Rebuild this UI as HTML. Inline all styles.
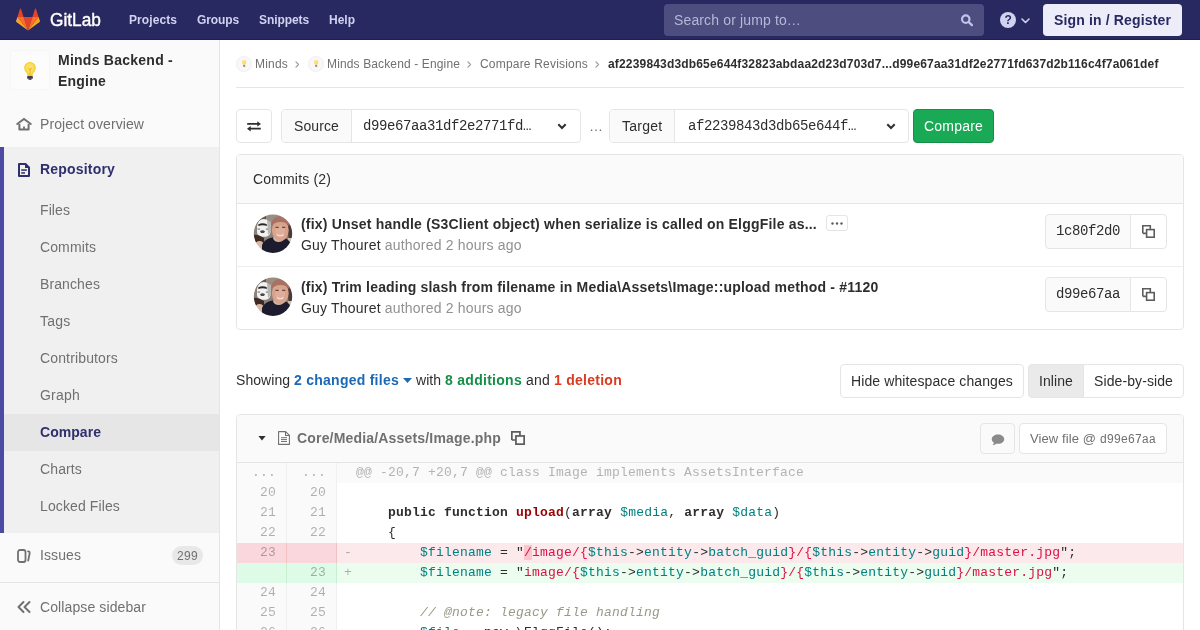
<!DOCTYPE html>
<html><head><meta charset="utf-8"><title>Compare · Minds Backend - Engine · GitLab</title>
<style>
*{box-sizing:border-box}
html,body{margin:0;padding:0}
body{width:1200px;height:630px;overflow:hidden;background:#fff;font-family:"Liberation Sans",sans-serif;font-size:14px;color:#2e2e2e;position:relative}
.t{position:absolute;white-space:pre;margin:0}
.abs{position:absolute}
svg{position:absolute;overflow:visible}
.mono{font-family:"Liberation Mono",monospace}
.hdr{position:absolute;left:0;top:0;width:1200px;height:40px;background:#292961;box-shadow:inset 0 -1px 0 #1f1f55}
.side{position:absolute;left:0;top:40px;width:220px;height:590px;background:#fafafa;border-right:1px solid #e5e5e5}
.box{position:absolute;border:1px solid #e5e5e5;border-radius:4px;background:#fff}
.row{position:absolute;left:237px;width:946px;height:20px}
.row .o,.row .n{position:absolute;top:0;width:50px;height:20px;background:#fafafa;border-right:1px solid #f0f0f0}
.row .o{left:0}.row .n{left:50px}
.row .c{position:absolute;left:100px;top:0;width:846px;height:20px;background:#fff}
.row.m .c{background:#fafafa}
.row.del .o,.row.del .n{background:#f9d7dc;border-color:#f1c0c0}
.row.del .c{background:#fbe9eb}
.row.add .o,.row.add .n{background:#ddfbe6;border-color:#c7f0d2}
.row.add .c{background:#ecfdf0}
.code{position:absolute;left:119px;top:0;font-family:"Liberation Mono",monospace;font-size:13px;line-height:20px;letter-spacing:0.2px;white-space:pre;color:#2e2e2e}
.num{position:absolute;top:0;font-family:"Liberation Mono",monospace;font-size:13px;line-height:20px;letter-spacing:0.2px;white-space:pre;color:rgba(0,0,0,.3);text-align:right}
.k{font-weight:bold}.nf{color:#900;font-weight:bold}.nv{color:#008080}.s{color:#d14}.cm{color:#998;font-style:italic}.idiff{background:#fac5cd}
#w{position:absolute;left:0;top:0;width:1200px;height:630px;overflow:hidden;will-change:transform}
</style></head><body><div id="w">
<div class="hdr">
<svg style="left:16px;top:8.400px" width="24" height="23" viewBox="0 0 24 23"><path d="M12 22.6 16.4 9H7.6z" fill="#e24329"/><path d="M12 22.600 7.600 9H1.400z" fill="#fc6d26"/><path d="M1.400 9 .05 13.100c-.12.380.01.790.330 1.020L12 22.600z" fill="#fca326"/><path d="M1.400 9h6.200L4.940.800c-.140-.420-.730-.420-.870 0z" fill="#e24329"/><path d="M12 22.600 16.400 9h6.200z" fill="#fc6d26"/><path d="m22.600 9 1.350 4.100c.12.380-.01.790-.33 1.020L12 22.600z" fill="#fca326"/><path d="M22.600 9h-6.200L19.060.8c.14-.42.730-.42.870 0z" fill="#e24329"/></svg>
<div class="t" style="left:49.500px;top:7.800px;font-size:18px;line-height:24px;color:#fff;-webkit-text-stroke:0.400px #fff;transform-origin:0 50%;transform:scaleX(0.960)">GitLab</div>
<div class="t" style="left:129px;top:10px;font-size:12px;line-height:20px;letter-spacing:0.082px;font-weight:bold;color:#d1d1f0;">Projects</div>
<div class="t" style="left:197px;top:10px;font-size:12px;line-height:20px;letter-spacing:-0.110px;font-weight:bold;color:#d1d1f0;">Groups</div>
<div class="t" style="left:259px;top:10px;font-size:12px;line-height:20px;letter-spacing:-0.082px;font-weight:bold;color:#d1d1f0;">Snippets</div>
<div class="t" style="left:329px;top:10px;font-size:12px;line-height:20px;letter-spacing:0.000px;font-weight:bold;color:#d1d1f0;">Help</div>
<div class="abs" style="left:664px;top:4px;width:320px;height:32px;border-radius:4px;background:#4d4d80"></div>
<div class="t" style="left:674px;top:10px;font-size:14px;line-height:20px;letter-spacing:0.138px;color:#b7b7d6;">Search or jump to…</div>
<svg style="left:960px;top:14px" width="13" height="13" viewBox="0 0 13 13"><circle cx="5.750" cy="5.150" r="3.700" fill="none" stroke="#c4c4ea" stroke-width="2.200"/><path d="M8.600 8 11.900 11.200" stroke="#c4c4ea" stroke-width="2.300" stroke-linecap="round"/></svg>
<div class="abs" style="left:1000px;top:12.300px;width:16px;height:16px;border-radius:50%;background:#d1d1f0"></div>
<div class="t" style="left:1004.500px;top:12.300px;font-size:12px;line-height:16px;font-weight:bold;color:#292961">?</div>
<svg style="left:1021px;top:17.900px" width="9" height="6" viewBox="0 0 9 6"><path d="M1 1 4.500 4.500 8 1" fill="none" stroke="#d1d1f0" stroke-width="1.600" stroke-linecap="round" stroke-linejoin="round"/></svg>
<div class="abs" style="left:1043px;top:4px;width:139px;height:32px;border-radius:4px;background:#ededfa"></div>
<div class="t" style="left:1054px;top:10px;font-size:14px;line-height:20px;letter-spacing:0.147px;font-weight:bold;color:#292961;">Sign in / Register</div>
</div>
<div class="side">
<div class="abs" style="left:10px;top:10px;width:40px;height:40px;border-radius:3px;background:#fcfcfc;border:1px solid #f6f6f6"></div>
<svg style="left:23.500px;top:22px" width="12" height="18" viewBox="0 0 13 20"><path d="M6.500 0C2.900 0 0 2.800 0 6.300c0 2.300 1.300 4 2.300 5.500.7 1 1.200 2.200 1.200 3.700h6c0-1.500.5-2.700 1.200-3.700 1-1.500 2.300-3.200 2.300-5.500C13 2.800 10.100 0 6.500 0z" fill="#f7d23a"/><path d="M6.500 1.500c-2.500 0-4.500 2-4.500 4.500 0 1.500.8 2.800 1.600 4l1.200 3h3.400l1.200-3c.8-1.200 1.600-2.500 1.600-4 0-2.500-2-4.500-4.500-4.500z" fill="#fbe98a" opacity=".6"/><path d="M4.500 6.500 6.500 9 8.500 6.500M6.500 9v6" fill="none" stroke="#f2b200" stroke-width="1"/><rect x="3.300" y="15.500" width="6.400" height="3.200" rx="1" fill="#4a3b52"/><rect x="4.600" y="18.200" width="3.800" height="1.600" rx=".8" fill="#2f2535"/></svg>
<div class="t" style="left:58px;top:10px;font-size:14px;line-height:21px;letter-spacing:0.250px;font-weight:bold;">Minds Backend -</div>
<div class="t" style="left:58px;top:31px;font-size:14px;line-height:21px;letter-spacing:0.222px;font-weight:bold;">Engine</div>
<svg style="left:16px;top:76px" width="16" height="16" viewBox="0 0 16 16"><path d="M1.200 8 8 3 14.800 8" fill="none" stroke="#707070" stroke-width="2" stroke-linecap="round" stroke-linejoin="miter"/><path d="M3.400 8v5.600h9.200V8" fill="none" stroke="#707070" stroke-width="2" stroke-linejoin="round"/><path d="M8 10.600v3" stroke="#707070" stroke-width="1.800"/></svg>
<div class="t" style="left:40px;top:74px;font-size:14px;line-height:20px;letter-spacing:0.080px;color:#707070;">Project overview</div>
<div class="abs" style="left:0;top:107px;width:219px;height:386px;background:#f0f0f0"></div>
<div class="abs" style="left:0;top:107px;width:4px;height:386px;background:#4b4ba3"></div>
<div class="abs" style="left:4px;top:374px;width:215px;height:37px;background:#e6e6e6"></div>
<svg style="left:16px;top:121px" width="16" height="16" viewBox="0 0 16 16"><path d="M3 3h6.500L13 6.500V15H3z" fill="none" stroke="#2f2f6e" stroke-width="2" stroke-linejoin="round"/><path d="M9 3v4h4" fill="#2f2f6e"/><rect x="5.200" y="8.300" width="5.700" height="1.500" fill="#2f2f6e"/><rect x="5.200" y="11.200" width="3.800" height="1.500" fill="#2f2f6e"/></svg>
<div class="t" style="left:40px;top:119px;font-size:14px;line-height:20px;letter-spacing:0.187px;font-weight:bold;color:#2f2f6e;">Repository</div>
<div class="t" style="left:40px;top:160px;font-size:14px;line-height:20px;letter-spacing:0.088px;color:#707070;">Files</div>
<div class="t" style="left:40px;top:197px;font-size:14px;line-height:20px;letter-spacing:0.111px;color:#707070;">Commits</div>
<div class="t" style="left:40px;top:234px;font-size:14px;line-height:20px;letter-spacing:0.105px;color:#707070;">Branches</div>
<div class="t" style="left:40px;top:271px;font-size:14px;line-height:20px;letter-spacing:0.220px;color:#707070;">Tags</div>
<div class="t" style="left:40px;top:308px;font-size:14px;line-height:20px;letter-spacing:0.144px;color:#707070;">Contributors</div>
<div class="t" style="left:40px;top:345px;font-size:14px;line-height:20px;letter-spacing:0.216px;color:#707070;">Graph</div>
<div class="t" style="left:40px;top:382px;font-size:14px;line-height:20px;letter-spacing:0.044px;font-weight:bold;color:#2f2f6e;">Compare</div>
<div class="t" style="left:40px;top:419px;font-size:14px;line-height:20px;letter-spacing:0.127px;color:#707070;">Charts</div>
<div class="t" style="left:40px;top:456px;font-size:14px;line-height:20px;letter-spacing:0.116px;color:#707070;">Locked Files</div>
<svg style="left:16px;top:508px" width="16" height="16" viewBox="0 0 16 16"><rect x="2" y="2" width="7.500" height="12" rx="2" fill="none" stroke="#707070" stroke-width="1.800"/><path d="M12 3.400l.900.300c.600.200.900.700.800 1.300l-1.500 7.600" fill="none" stroke="#707070" stroke-width="1.800" stroke-linecap="round" stroke-linejoin="round"/></svg>
<div class="t" style="left:40px;top:505px;font-size:14px;line-height:20px;letter-spacing:0.088px;color:#707070;">Issues</div>
<div class="abs" style="left:172px;top:506px;width:31px;height:19px;border-radius:10px;background:#e8e8e8"></div>
<div class="t" style="left:177px;top:507px;font-size:12px;line-height:19px;letter-spacing:0.330px;color:#707070;">299</div>
<div class="abs" style="left:0;top:542px;width:219px;height:48px;border-top:1px solid #e5e5e5;background:#fafafa"></div>
<svg style="left:17px;top:561px" width="14" height="12" viewBox="0 0 14 12"><path d="M6.500 1 1.500 6 6.500 11M12.500 1 7.500 6 12.500 11" fill="none" stroke="#707070" stroke-width="2" stroke-linecap="round" stroke-linejoin="round"/></svg>
<div class="t" style="left:40px;top:557px;font-size:14px;line-height:20px;letter-spacing:0.106px;color:#707070;">Collapse sidebar</div>
</div>
<div class="abs" style="left:236px;top:87px;width:948px;height:1px;background:#e5e5e5"></div>
<div class="abs" style="left:236px;top:56px;width:15.500px;height:15.500px;border-radius:50%;background:#f8f8f8;border:1px solid #efefef"></div><svg style="left:241.6px;top:60px" width="4.400" height="7" viewBox="0 0 13 20" opacity=".75"><path d="M6.500 0C2.900 0 0 2.800 0 6.300c0 2.300 1.300 4 2.300 5.500.7 1 1.200 2.200 1.200 3.700h6c0-1.500.5-2.700 1.200-3.700 1-1.500 2.300-3.200 2.300-5.500C13 2.800 10.100 0 6.500 0z" fill="#f7d23a"/><path d="M6.500 1.500c-2.500 0-4.500 2-4.500 4.500 0 1.500.8 2.800 1.600 4l1.200 3h3.400l1.200-3c.8-1.200 1.600-2.500 1.600-4 0-2.500-2-4.500-4.500-4.500z" fill="#fbe98a" opacity=".6"/><path d="M4.500 6.500 6.500 9 8.500 6.500M6.500 9v6" fill="none" stroke="#f2b200" stroke-width="1"/><rect x="3.300" y="15.500" width="6.400" height="3.200" rx="1" fill="#4a3b52"/><rect x="4.600" y="18.200" width="3.800" height="1.600" rx=".8" fill="#2f2535"/></svg>
<div class="t" style="left:255px;top:54px;font-size:12px;line-height:20px;letter-spacing:0.198px;color:#707070;">Minds</div>
<svg style="left:295px;top:60.500px" width="4.500" height="7" viewBox="0 0 5 8"><path d="M1 1 4 4 1 7" fill="none" stroke="#999" stroke-width="1.300" stroke-linecap="round" stroke-linejoin="round"/></svg>
<div class="abs" style="left:308px;top:56px;width:15.500px;height:15.500px;border-radius:50%;background:#f8f8f8;border:1px solid #efefef"></div><svg style="left:313.6px;top:60px" width="4.400" height="7" viewBox="0 0 13 20" opacity=".75"><path d="M6.500 0C2.900 0 0 2.800 0 6.300c0 2.300 1.300 4 2.300 5.500.7 1 1.200 2.200 1.200 3.700h6c0-1.500.5-2.700 1.200-3.700 1-1.500 2.300-3.200 2.300-5.500C13 2.800 10.100 0 6.500 0z" fill="#f7d23a"/><path d="M6.500 1.500c-2.500 0-4.500 2-4.500 4.500 0 1.500.8 2.800 1.600 4l1.200 3h3.400l1.200-3c.8-1.200 1.600-2.500 1.600-4 0-2.500-2-4.500-4.500-4.500z" fill="#fbe98a" opacity=".6"/><path d="M4.500 6.500 6.500 9 8.500 6.500M6.500 9v6" fill="none" stroke="#f2b200" stroke-width="1"/><rect x="3.300" y="15.500" width="6.400" height="3.200" rx="1" fill="#4a3b52"/><rect x="4.600" y="18.200" width="3.800" height="1.600" rx=".8" fill="#2f2535"/></svg>
<div class="t" style="left:327px;top:54px;font-size:12px;line-height:20px;letter-spacing:0.135px;color:#707070;">Minds Backend - Engine</div>
<svg style="left:467px;top:60.500px" width="4.500" height="7" viewBox="0 0 5 8"><path d="M1 1 4 4 1 7" fill="none" stroke="#999" stroke-width="1.300" stroke-linecap="round" stroke-linejoin="round"/></svg>
<div class="t" style="left:480px;top:54px;font-size:12px;line-height:20px;letter-spacing:0.194px;color:#707070;">Compare Revisions</div>
<svg style="left:595px;top:60.500px" width="4.500" height="7" viewBox="0 0 5 8"><path d="M1 1 4 4 1 7" fill="none" stroke="#999" stroke-width="1.300" stroke-linecap="round" stroke-linejoin="round"/></svg>
<div class="t" style="left:608px;top:54px;font-size:12px;line-height:20px;letter-spacing:0.171px;font-weight:bold;color:#2e2e2e;">af2239843d3db65e644f32823abdaa2d23d703d7...d99e67aa31df2e2771fd637d2b116c4f7a061def</div>
<div class="box" style="left:236px;top:109px;width:36px;height:34px"></div>
<svg style="left:246px;top:119px" width="16" height="14" viewBox="0 0 16 14"><path d="M1.200 4.900h11M4 9.700h10.800" stroke="#2e2e2e" stroke-width="1.700" fill="none"/><path d="M11.300 2.200 15 4.900l-3.700 2.700zM4.700 7 1 9.700l3.700 2.700z" fill="#2e2e2e"/></svg>
<div class="box" style="left:281px;top:109px;width:300px;height:34px"></div>
<div class="abs" style="left:282px;top:110px;width:70px;height:32px;background:#fafafa;border-right:1px solid #e5e5e5;border-radius:3px 0 0 3px"></div>
<div class="t" style="left:294px;top:116px;font-size:14px;line-height:20px;letter-spacing:0.105px;">Source</div>
<div class="t" style="left:363px;top:116px;font-size:14px;line-height:20px;letter-spacing:-0.400px;font-family:'Liberation Mono',monospace;">d99e67aa31df2e2771fd…</div>
<svg style="left:557px;top:122.8px" width="10" height="7" viewBox="0 0 10 7"><path d="M1.300 1.300 5 5 8.700 1.300" fill="none" stroke="#2e2e2e" stroke-width="2" stroke-linejoin="miter"/></svg>
<div class="t" style="left:589px;top:116px;font-size:14px;line-height:20px;letter-spacing:0.000px;color:#707070;">…</div>
<div class="box" style="left:609px;top:109px;width:300px;height:34px"></div>
<div class="abs" style="left:610px;top:110px;width:65px;height:32px;background:#fafafa;border-right:1px solid #e5e5e5;border-radius:3px 0 0 3px"></div>
<div class="t" style="left:622px;top:116px;font-size:14px;line-height:20px;letter-spacing:0.256px;">Target</div>
<div class="t" style="left:688px;top:116px;font-size:14px;line-height:20px;letter-spacing:-0.400px;font-family:'Liberation Mono',monospace;">af2239843d3db65e644f…</div>
<svg style="left:885.5px;top:122.8px" width="10" height="7" viewBox="0 0 10 7"><path d="M1.300 1.300 5 5 8.700 1.300" fill="none" stroke="#2e2e2e" stroke-width="2" stroke-linejoin="miter"/></svg>
<div class="box" style="left:913px;top:109px;width:81px;height:34px;background:#1aaa55;border-color:#168f48"></div>
<div class="t" style="left:924px;top:116px;font-size:14px;line-height:20px;letter-spacing:0.201px;color:#fff;">Compare</div>
<div class="box" style="left:236px;top:154px;width:948px;height:176px"></div>
<div class="abs" style="left:237px;top:155px;width:946px;height:49px;background:#fafafa;border-bottom:1px solid #e5e5e5;border-radius:3px 3px 0 0"></div>
<div class="t" style="left:253px;top:169px;font-size:14px;line-height:20px;letter-spacing:0.162px;">Commits (2)</div>
<div class="abs" style="left:237px;top:266px;width:946px;height:1px;background:#eee"></div>
<svg style="left:253px;top:214px" width="40" height="40" viewBox="0 0 40 40"><defs><clipPath id="cp1"><circle cx="20" cy="19.700" r="19.200"/></clipPath><filter id="bl1" x="-20%" y="-20%" width="140%" height="140%"><feGaussianBlur stdDeviation="0.78"/></filter></defs>
<g clip-path="url(#cp1)"><g filter="url(#bl1)"><rect x="-3" y="-3" width="46" height="46" fill="#8d827a"/>
<path d="M-2-2h17l-2 7-15 9z" fill="#5e5853"/><path d="M13 0h12v9H13z" fill="#9a8d84"/>
<path d="M34 7h9v22h-7z" fill="#4c3a36"/><path d="M35 24h8v8h-8z" fill="#c9bdb5"/>
<path d="M4 13.500c0-5.500 3-8.500 6.800-8.500s6.700 3 6.700 8.500v4c0 3-2 5.300-6.700 5.300S4 20.500 4 17.500z" fill="#f1f1f1"/><path d="M14 6l4 2v10l-3 3z" fill="#b9b6b3"/>
<path d="M5.300 10.200c2.800-1.200 6-1.200 8.500 0v1.700c-2.500-1-5.700-1-8.500 0z" fill="#2b2b2b"/><path d="M7 17.300c1.300-1.400 3.600-1.400 5 0l-1 1.700H8z" fill="#4a4a4a"/><path d="M4.500 14.300h2.600v1.800H4.500zM12.800 14.300h2.600v1.800h-2.600z" fill="#a5a5a5"/>
<path d="M-1 21c3-1 8 0 12 3v6H-1z" fill="#3e2b23"/><ellipse cx="6.500" cy="31" rx="4.500" ry="4" fill="#d9b9a5"/>
<path d="M9 42V31c2-5 7-7.500 12-7.500h8c4 0 8 3 10 8.500v10z" fill="#1a1f2d"/>
<path d="M20 24.500c2 4.800 9 4.800 11.500 0l-1-3h-9.500z" fill="#d8b4a0"/>
<ellipse cx="27.300" cy="16.300" rx="8.400" ry="11" fill="#d9a28c"/><ellipse cx="27" cy="17.500" rx="5" ry="6" fill="#e0ae98"/>
<path d="M18.300 12.500c-.6-6.500 4-10.500 9.500-10.500s9.300 3.800 8.500 10.500c-1.500-3-4.500-4.500-8.800-4.500s-7.500 1.500-9.200 4.500z" fill="#a87262"/>
<path d="M22.500 13.300h3.300M29 13.300h3.300" stroke="#6e4a3f" stroke-width="1.200"/><path d="M24 20.500c1.800 1.700 4.800 1.700 6.400 0" stroke="#f3e3dd" stroke-width="1.100" fill="none"/></g></g></svg>
<div class="t" style="left:301px;top:214px;font-size:14px;line-height:20px;letter-spacing:0.199px;font-weight:bold;">(fix) Unset handle (S3Client object) when serialize is called on ElggFile as...</div>
<div class="t" style="left:301px;top:235px;line-height:20px;font-size:14px"><span style="letter-spacing:0.198px;">Guy Thouret</span><span style="letter-spacing:0.189px;color:#919191;"> authored 2 hours ago</span></div>
<div class="box" style="left:1045px;top:214px;width:86px;height:35px;background:#fafafa;border-radius:4px 0 0 4px"></div>
<div class="t" style="left:1056px;top:221px;font-size:14px;line-height:20px;letter-spacing:-0.400px;font-family:'Liberation Mono',monospace;">1c80f2d0</div>
<div class="box" style="left:1130px;top:214px;width:37px;height:35px;border-radius:0 4px 4px 0"></div>
<svg style="left:1142px;top:225px" width="13" height="13" viewBox="0 0 14 14"><path d="M.850 9V.850h8.100v4.100M.850 9h4.100" fill="none" stroke="#5c5c5c" stroke-width="1.7"/><rect x="4.950" y="4.950" width="8.200" height="8.200" fill="none" stroke="#5c5c5c" stroke-width="1.7"/></svg>
<div class="box" style="left:826px;top:215px;width:22px;height:16px;border-color:#e5e5e5;border-radius:3px;background:#fff"></div>
<svg style="left:831px;top:221.500px" width="12" height="3" viewBox="0 0 12 3"><circle cx="1.500" cy="1.500" r="1.200" fill="#5c5c5c"/><circle cx="6" cy="1.500" r="1.200" fill="#5c5c5c"/><circle cx="10.500" cy="1.500" r="1.200" fill="#5c5c5c"/></svg>
<svg style="left:253px;top:277px" width="40" height="40" viewBox="0 0 40 40"><defs><clipPath id="cp2"><circle cx="20" cy="19.700" r="19.200"/></clipPath><filter id="bl2" x="-20%" y="-20%" width="140%" height="140%"><feGaussianBlur stdDeviation="0.78"/></filter></defs>
<g clip-path="url(#cp2)"><g filter="url(#bl2)"><rect x="-3" y="-3" width="46" height="46" fill="#8d827a"/>
<path d="M-2-2h17l-2 7-15 9z" fill="#5e5853"/><path d="M13 0h12v9H13z" fill="#9a8d84"/>
<path d="M34 7h9v22h-7z" fill="#4c3a36"/><path d="M35 24h8v8h-8z" fill="#c9bdb5"/>
<path d="M4 13.500c0-5.500 3-8.500 6.800-8.500s6.700 3 6.700 8.500v4c0 3-2 5.300-6.700 5.300S4 20.500 4 17.500z" fill="#f1f1f1"/><path d="M14 6l4 2v10l-3 3z" fill="#b9b6b3"/>
<path d="M5.300 10.200c2.800-1.200 6-1.200 8.500 0v1.700c-2.500-1-5.700-1-8.500 0z" fill="#2b2b2b"/><path d="M7 17.300c1.300-1.400 3.600-1.400 5 0l-1 1.700H8z" fill="#4a4a4a"/><path d="M4.500 14.300h2.600v1.800H4.500zM12.800 14.300h2.600v1.800h-2.600z" fill="#a5a5a5"/>
<path d="M-1 21c3-1 8 0 12 3v6H-1z" fill="#3e2b23"/><ellipse cx="6.500" cy="31" rx="4.500" ry="4" fill="#d9b9a5"/>
<path d="M9 42V31c2-5 7-7.500 12-7.500h8c4 0 8 3 10 8.500v10z" fill="#1a1f2d"/>
<path d="M20 24.500c2 4.800 9 4.800 11.500 0l-1-3h-9.500z" fill="#d8b4a0"/>
<ellipse cx="27.300" cy="16.300" rx="8.400" ry="11" fill="#d9a28c"/><ellipse cx="27" cy="17.500" rx="5" ry="6" fill="#e0ae98"/>
<path d="M18.300 12.500c-.6-6.500 4-10.500 9.500-10.500s9.300 3.800 8.500 10.500c-1.500-3-4.500-4.500-8.800-4.500s-7.500 1.500-9.200 4.500z" fill="#a87262"/>
<path d="M22.500 13.300h3.300M29 13.300h3.300" stroke="#6e4a3f" stroke-width="1.200"/><path d="M24 20.500c1.800 1.700 4.800 1.700 6.400 0" stroke="#f3e3dd" stroke-width="1.100" fill="none"/></g></g></svg>
<div class="t" style="left:301px;top:277px;font-size:14px;line-height:20px;letter-spacing:0.189px;font-weight:bold;">(fix) Trim leading slash from filename in Media\Assets\Image::upload method - #1120</div>
<div class="t" style="left:301px;top:298px;line-height:20px;font-size:14px"><span style="letter-spacing:0.198px;">Guy Thouret</span><span style="letter-spacing:0.189px;color:#919191;"> authored 2 hours ago</span></div>
<div class="box" style="left:1045px;top:277px;width:86px;height:35px;background:#fafafa;border-radius:4px 0 0 4px"></div>
<div class="t" style="left:1056px;top:284px;font-size:14px;line-height:20px;letter-spacing:-0.400px;font-family:'Liberation Mono',monospace;">d99e67aa</div>
<div class="box" style="left:1130px;top:277px;width:37px;height:35px;border-radius:0 4px 4px 0"></div>
<svg style="left:1142px;top:288px" width="13" height="13" viewBox="0 0 14 14"><path d="M.850 9V.850h8.100v4.100M.850 9h4.100" fill="none" stroke="#5c5c5c" stroke-width="1.7"/><rect x="4.950" y="4.950" width="8.200" height="8.200" fill="none" stroke="#5c5c5c" stroke-width="1.7"/></svg>
<div class="t" style="left:236px;top:370px;line-height:20px;font-size:14px"><span style="letter-spacing:0.049px;">Showing </span><span style="letter-spacing:0.256px;font-weight:bold;color:#1b69b6;">2 changed files</span></div>
<svg style="left:403px;top:378px" width="9" height="5" viewBox="0 0 9 5"><path d="M0 0h9L4.500 5z" fill="#1b69b6"/></svg>
<div class="t" style="left:416px;top:370px;line-height:20px;font-size:14px"><span style="letter-spacing:0.042px;">with </span><span style="letter-spacing:0.282px;font-weight:bold;color:#168f48;">8 additions</span><span style="letter-spacing:0.170px;"> and </span><span style="letter-spacing:0.265px;font-weight:bold;color:#db3b21;">1 deletion</span></div>
<div class="box" style="left:840px;top:364px;width:184px;height:34px"></div>
<div class="t" style="left:851px;top:371px;font-size:14px;line-height:20px;letter-spacing:0.105px;">Hide whitespace changes</div>
<div class="box" style="left:1028px;top:364px;width:56px;height:34px;background:#eaeaea;border-radius:4px 0 0 4px"></div>
<div class="t" style="left:1039px;top:371px;font-size:14px;line-height:20px;letter-spacing:0.087px;">Inline</div>
<div class="box" style="left:1083px;top:364px;width:101px;height:34px;border-radius:0 4px 4px 0"></div>
<div class="t" style="left:1094px;top:371px;font-size:14px;line-height:20px;letter-spacing:0.098px;">Side-by-side</div>
<div class="box" style="left:236px;top:414px;width:948px;height:230px;border-radius:4px 4px 0 0"></div>
<div class="abs" style="left:237px;top:415px;width:946px;height:48px;background:#fafafa;border-bottom:1px solid #e5e5e5;border-radius:3px 3px 0 0"></div>
<svg style="left:258px;top:436px" width="8" height="4.500" viewBox="0 0 8 5"><path d="M0 0h8L4 5z" fill="#2e2e2e"/></svg>
<svg style="left:278px;top:431px" width="12" height="14" viewBox="0 0 12 14"><path d="M.600.600h7L11.400 4.400V13.400H.600z" fill="#fff" stroke="#707070" stroke-width="1.100" stroke-linejoin="round"/><path d="M7.500.600V4.500h3.900" fill="none" stroke="#707070" stroke-width="1.100"/><path d="M3 6.700h6M3 8.600h6M3 10.500h6" stroke="#707070" stroke-width="1"/></svg>
<div class="t" style="left:297px;top:428px;font-size:14px;line-height:20px;letter-spacing:0.178px;font-weight:bold;color:#707070;">Core/Media/Assets/Image.php</div>
<svg style="left:511px;top:431px" width="14" height="14" viewBox="0 0 14 14"><path d="M.850 9V.850h8.100v4.100M.850 9h4.100" fill="none" stroke="#5c5c5c" stroke-width="1.7"/><rect x="4.950" y="4.950" width="8.200" height="8.200" fill="none" stroke="#5c5c5c" stroke-width="1.7"/></svg>
<div class="box" style="left:980px;top:423px;width:35px;height:31px;background:#fafafa"></div>
<svg style="left:990.500px;top:433.500px" width="14" height="11.500" viewBox="0 0 14 12"><path d="M7 .5C3.400.5.500 2.700.500 5.400c0 1.500.9 2.800 2.300 3.700-.2.900-.8 1.700-1.500 2.300 1.500 0 2.900-.5 3.900-1.300.6.100 1.200.2 1.800.2 3.600 0 6.500-2.200 6.500-4.900S10.600.5 7 .5z" fill="#8a8a8a"/></svg>
<div class="box" style="left:1019px;top:423px;width:148px;height:31px"></div>
<div class="t" style="left:1030px;top:428.500px;line-height:20px;font-size:13px;color:#707070"><span style="letter-spacing:0.098px;">View file @ </span><span class="mono" style="font-size:12px;letter-spacing:-0.200px">d99e67aa</span></div>
<div class="row m" style="top:463px"><div class="o"></div><div class="n"></div><div class="c"></div><div class="num" style="left:0;width:39px">...</div><div class="num" style="left:50px;width:39px">...</div><div class="code"><span style="color:#b3b3b3">@@ -20,7 +20,7 @@ class Image implements AssetsInterface</span></div></div>
<div class="row " style="top:483px"><div class="o"></div><div class="n"></div><div class="c"></div><div class="num" style="left:0;width:39px">20</div><div class="num" style="left:50px;width:39px">20</div><div class="code"></div></div>
<div class="row " style="top:503px"><div class="o"></div><div class="n"></div><div class="c"></div><div class="num" style="left:0;width:39px">21</div><div class="num" style="left:50px;width:39px">21</div><div class="code">    <span class="k">public</span> <span class="k">function</span> <span class="nf">upload</span>(<span class="k">array</span> <span class="nv">$media</span>, <span class="k">array</span> <span class="nv">$data</span>)</div></div>
<div class="row " style="top:523px"><div class="o"></div><div class="n"></div><div class="c"></div><div class="num" style="left:0;width:39px">22</div><div class="num" style="left:50px;width:39px">22</div><div class="code">    {</div></div>
<div class="row del" style="top:543px"><div class="o"></div><div class="n"></div><div class="c"></div><div class="num" style="left:0;width:39px">23</div><div class="num" style="left:107px;color:rgba(0,0,0,.3)">-</div><div class="code">        <span class="nv">$filename</span> = "<span class="idiff s">/</span><span class="s">image/{</span><span class="nv">$this</span>-&gt;<span class="nv">entity</span>-&gt;<span class="nv">batch_guid</span><span class="s">}/{</span><span class="nv">$this</span>-&gt;<span class="nv">entity</span>-&gt;<span class="nv">guid</span><span class="s">}/master.jpg</span>";</div></div>
<div class="row add" style="top:563px"><div class="o"></div><div class="n"></div><div class="c"></div><div class="num" style="left:50px;width:39px">23</div><div class="num" style="left:107px;color:rgba(0,0,0,.3)">+</div><div class="code">        <span class="nv">$filename</span> = "<span class="s">image/{</span><span class="nv">$this</span>-&gt;<span class="nv">entity</span>-&gt;<span class="nv">batch_guid</span><span class="s">}/{</span><span class="nv">$this</span>-&gt;<span class="nv">entity</span>-&gt;<span class="nv">guid</span><span class="s">}/master.jpg</span>";</div></div>
<div class="row " style="top:583px"><div class="o"></div><div class="n"></div><div class="c"></div><div class="num" style="left:0;width:39px">24</div><div class="num" style="left:50px;width:39px">24</div><div class="code"></div></div>
<div class="row " style="top:603px"><div class="o"></div><div class="n"></div><div class="c"></div><div class="num" style="left:0;width:39px">25</div><div class="num" style="left:50px;width:39px">25</div><div class="code">        <span class="cm">// @note: legacy file handling</span></div></div>
<div class="row " style="top:623px"><div class="o"></div><div class="n"></div><div class="c"></div><div class="num" style="left:0;width:39px">26</div><div class="num" style="left:50px;width:39px">26</div><div class="code">        <span class="nv">$file</span> = <span class="k">new</span> \ElggFile();</div></div>
</div></body></html>
